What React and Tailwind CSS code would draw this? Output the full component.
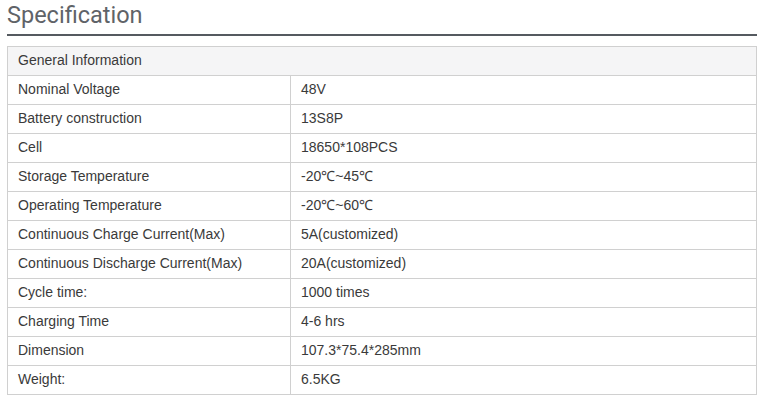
import React from "react";

const rows = [
  ["Nominal Voltage", "48V"],
  ["Battery construction", "13S8P"],
  ["Cell", "18650*108PCS"],
  ["Storage Temperature", "-20℃~45℃"],
  ["Operating Temperature", "-20℃~60℃"],
  ["Continuous Charge Current(Max)", "5A(customized)"],
  ["Continuous Discharge Current(Max)", "20A(customized)"],
  ["Cycle time:", "1000 times"],
  ["Charging Time", "4-6 hrs"],
  ["Dimension", "107.3*75.4*285mm"],
  ["Weight:", "6.5KG"],
];

const App = () => {
  return (
    <div className="w-[769px] h-[406px] bg-white pl-[7px] pr-[12px] overflow-hidden">
      {/* Heading */}
      <h2 className="font-['Roboto',sans-serif] text-[23.5px] leading-[30px] text-[#5f6368] h-[34px]">
        Specification
      </h2>
      <div className="h-[2px] bg-[#555a60]" />

      {/* Spec table */}
      <table className="mt-[10px] w-[750px] border-collapse font-['Liberation_Sans',Arial,sans-serif] text-[14px] text-[#3a3a3a]">
        <tbody>
          <tr className="h-[29px] bg-[#f5f5f6]">
            <td colSpan={2} className="border border-[#d0d0d0] pl-[10px] pb-[2px]">
              General Information
            </td>
          </tr>
          {rows.map(([label, value]) => (
            <tr key={label} className="h-[29px]">
              <td className="w-[283px] border border-[#d0d0d0] pl-[10px] pb-[2px]">{label}</td>
              <td className="border border-[#d0d0d0] pl-[10px] pb-[2px]">{value}</td>
            </tr>
          ))}
        </tbody>
      </table>
    </div>
  );
};

export default App;
